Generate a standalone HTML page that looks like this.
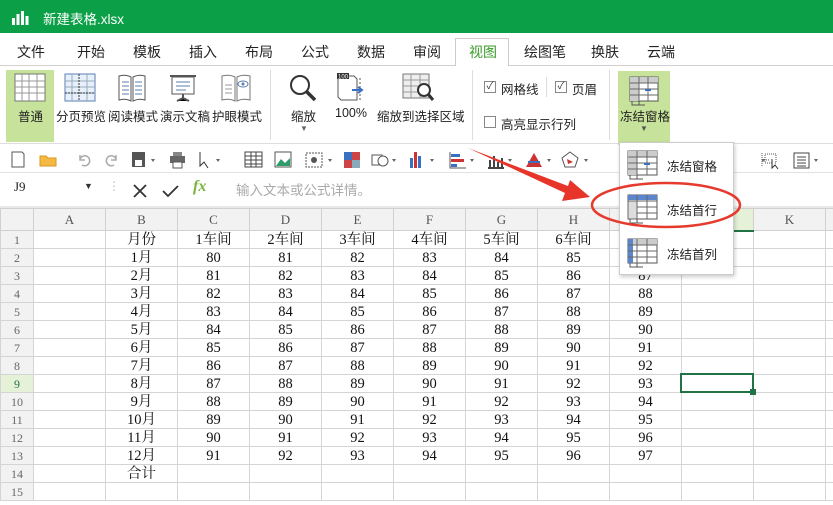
<!DOCTYPE html>
<html><head><meta charset="utf-8"><style>
*{margin:0;padding:0;box-sizing:border-box}
body{width:833px;height:505px;overflow:hidden;background:#fff;font-family:"Liberation Sans","Noto Sans CJK SC",sans-serif;position:relative;font-size:13px;color:#333}
.a{position:absolute}
.title{left:0;top:0;width:833px;height:33px;background:#0b9f48;color:#fff}
.menu{top:33px;left:0;width:833px;height:33px;border-bottom:1px solid #d0d0d0;background:#fff}
.menu span{position:absolute;top:9px;font-size:14px;color:#222}
.rib{top:66px;left:0;width:833px;height:78px;background:#fff;border-bottom:1px solid #ddd}
.lbl{font-size:12.5px;color:#222;white-space:nowrap}
.tb{top:145px;left:0;width:833px;height:28px;background:#fff;border-bottom:1px solid #e2e2e2}
.fb{top:173px;left:0;width:833px;height:33px;background:#fff}
table{position:absolute;left:0;top:208px;width:845px;border-collapse:collapse;table-layout:fixed;font-family:"Liberation Serif","Noto Serif CJK SC",serif;font-size:14.5px;color:#111}
td{height:18px;border:1px solid #d4d4d4;text-align:center;line-height:16px;padding:0;overflow:hidden;white-space:nowrap}
tr.h td{height:22px;background:#f2f2f2;color:#555;font-size:13px;border-color:#d0d0d0}
td.r{background:#f2f2f2;color:#666;font-size:12px}
.ic{position:absolute}
</style></head><body>
<div class="a title">
 <svg class="ic" style="left:12px;top:9px" width="18" height="16"><rect x="0" y="9" width="3" height="7" fill="#fff"/><rect x="4.5" y="5" width="3" height="11" fill="#fff"/><rect x="9" y="2" width="3" height="14" fill="#fff"/><rect x="13.5" y="7" width="3" height="9" fill="#fff"/></svg>
 <span class="a" style="left:43px;top:8px;font-size:13.5px">新建表格.xlsx</span>
</div>
<div class="a menu">
 <span style="left:17px">文件</span><span style="left:77px">开始</span><span style="left:133px">模板</span><span style="left:189px">插入</span><span style="left:245px">布局</span><span style="left:301px">公式</span><span style="left:357px">数据</span><span style="left:413px">审阅</span>
 <div class="a" style="left:455px;top:5px;width:54px;height:29px;border:1px solid #ccc;border-bottom:1px solid #fff;background:#fff"></div>
 <span style="left:469px;color:#3a9a2a">视图</span><span style="left:524px">绘图笔</span><span style="left:591px">换肤</span><span style="left:647px">云端</span>
</div>
<div class="a rib">
 <div class="a" style="left:6px;top:4px;width:48px;height:72px;background:#c7e29a"></div>
 <svg class="ic" style="left:14px;top:7px" width="32" height="30"><rect x="1" y="1" width="30" height="27" fill="#fff" stroke="#777"/><path d="M1 8H31M1 14H31M1 20H31M8 1V28M15 1V28M23 1V28" stroke="#999"/></svg>
 <svg class="ic" style="left:64px;top:7px" width="32" height="30"><rect x="1" y="1" width="30" height="27" fill="#e8f1fb" stroke="#5b7fb0"/><path d="M1 8H31M1 14H31M1 20H31M8 1V28M23 1V28" stroke="#9ab"/><path d="M15 1V28M1 20H31" stroke="#333" stroke-dasharray="2 1"/></svg>
 <svg class="ic" style="left:117px;top:7px" width="30" height="30"><path d="M2 3Q8 1 14 4V28Q8 25 2 27Z M28 3Q22 1 16 4V28Q22 25 28 27Z" fill="#fff" stroke="#555"/><path d="M5 9H12M5 13H12M5 17H12M5 21H12M18 9H25M18 13H25M18 17H25M18 21H25" stroke="#5b7fb0"/></svg>
 <svg class="ic" style="left:168px;top:7px" width="30" height="30"><path d="M2 3H28" stroke="#555" stroke-width="2"/><rect x="4" y="4" width="22" height="17" fill="#fff" stroke="#555"/><path d="M8 9H22M8 13H22M8 17H18" stroke="#5b7fb0"/><path d="M15 21V26M9 28L15 25L21 28" stroke="#555" stroke-width="2"/></svg>
 <svg class="ic" style="left:220px;top:7px" width="32" height="30"><path d="M2 3Q9 1 15 4V28Q9 25 2 27Z M30 3Q23 1 17 4V28Q23 25 30 27Z" fill="#fff" stroke="#777"/><path d="M5 12H12M5 16H12M5 20H12" stroke="#999"/><ellipse cx="23" cy="11" rx="5" ry="3" fill="#fff" stroke="#5b7fb0"/><circle cx="23" cy="11" r="1.5" fill="#5b7fb0"/></svg>
 <span class="a lbl" style="left:18px;top:40px">普通</span>
 <span class="a lbl" style="left:56px;top:40px">分页预览</span>
 <span class="a lbl" style="left:108px;top:40px">阅读模式</span>
 <span class="a lbl" style="left:160px;top:40px">演示文稿</span>
 <span class="a lbl" style="left:212px;top:40px">护眼模式</span>
 <div class="a" style="left:270px;top:4px;width:1px;height:70px;background:#ddd"></div>
 <svg class="ic" style="left:288px;top:7px" width="30" height="30"><circle cx="12" cy="12" r="9" fill="none" stroke="#333" stroke-width="2"/><path d="M18 18L27 27" stroke="#333" stroke-width="3.5"/></svg>
 <span class="a lbl" style="left:291px;top:40px">缩放</span>
 <span class="a" style="left:300px;top:58px;font-size:8px;color:#666">▼</span>
 <svg class="ic" style="left:336px;top:6px" width="30" height="32"><path d="M2 4H18L21 7V28H5L2 25Z" fill="#fff" stroke="#555"/><rect x="1" y="1" width="12" height="6" fill="#333"/><text x="2" y="6.5" font-size="6" fill="#fff" font-family="Liberation Sans">100</text><path d="M24 6V28" stroke="#555" stroke-dasharray="2 2"/><path d="M16 18H25M22 15L26 18L22 21" stroke="#3b6fc0" stroke-width="2" fill="none"/></svg>
 <span class="a lbl" style="left:335px;top:40px">100%</span>
 <svg class="ic" style="left:402px;top:7px" width="34" height="30"><rect x="1" y="1" width="26" height="24" fill="#eee" stroke="#777"/><path d="M1 7H27M1 13H27M1 19H27M9 1V25M18 1V25" stroke="#999"/><circle cx="22" cy="17" r="6" fill="#fff" stroke="#333" stroke-width="2"/><path d="M26 21L31 27" stroke="#333" stroke-width="3"/></svg>
 <span class="a lbl" style="left:377px;top:40px">缩放到选择区域</span>
 <div class="a" style="left:472px;top:4px;width:1px;height:70px;background:#ddd"></div>
 <div class="a" style="left:484px;top:15px;width:12px;height:12px;border:1px solid #888;font-size:10px;line-height:10px;text-align:center">✓</div>
 <span class="a lbl" style="left:501px;top:13px">网格线</span>
 <div class="a" style="left:546px;top:11px;width:1px;height:20px;background:#ddd"></div>
 <div class="a" style="left:555px;top:15px;width:12px;height:12px;border:1px solid #888;font-size:10px;line-height:10px;text-align:center">✓</div>
 <span class="a lbl" style="left:572px;top:13px">页眉</span>
 <div class="a" style="left:484px;top:50px;width:12px;height:12px;border:1px solid #888"></div>
 <span class="a lbl" style="left:501px;top:48px">高亮显示行列</span>
 <div class="a" style="left:609px;top:4px;width:1px;height:70px;background:#ddd"></div>
 <div class="a" style="left:618px;top:5px;width:52px;height:76px;background:#c7e29a"></div>
 <svg class="ic" style="left:629px;top:10px" width="32" height="30"><rect x="1" y="1" width="28" height="24" fill="#fff" stroke="#555"/><rect x="1" y="1" width="9" height="24" fill="#ccc"/><rect x="1" y="1" width="28" height="6" fill="#ccc"/><path d="M1 7H29M1 13H29M1 19H29M10 1V25M19 1V25" stroke="#666"/><path d="M16 14H22" stroke="#3b6fc0" stroke-width="2"/><path d="M3 25V29H10V25M10 29H16" stroke="#555" fill="none"/></svg>
 <span class="a lbl" style="left:620px;top:40px">冻结窗格</span>
 <span class="a" style="left:640px;top:58px;font-size:8px;color:#555">▼</span>
</div>
<div class="a tb">
 <svg class="ic" style="left:10px;top:6px" width="160" height="18"><path d="M2 1H12L14 3V16H2Z" fill="#fff" stroke="#555"/><path d="M30 5H36L38 7H46V15H30Z" fill="#f4b942" stroke="#d89a20"/><path d="M70 8A5 5 0 1 1 72 14M70 4V9H75" stroke="#aaa" fill="none" stroke-width="1.5"/><path d="M106 8A5 5 0 1 0 104 14M106 4V9H101" stroke="#aaa" fill="none" stroke-width="1.5"/><rect x="122" y="1" width="13" height="15" fill="#555"/><rect x="125" y="9" width="7" height="6" fill="#fff"/><path d="M141 8L143 11L145 8Z" fill="#666"/></svg>
 <svg class="ic" style="left:168px;top:5px" width="660" height="20">
  <rect x="2" y="6" width="15" height="7" fill="#666"/><rect x="5" y="2" width="9" height="4" fill="#888"/><rect x="5" y="12" width="9" height="6" fill="#fff" stroke="#555"/>
  <path d="M32 2L32 16L36 12L40 18" stroke="#333" fill="#fff"/><path d="M48 9L50 12L52 9Z" fill="#666"/>
  <rect x="77" y="2" width="17" height="15" fill="#fff" stroke="#444"/><path d="M77 6H94M77 10H94M77 14H94M83 2V17M88 2V17" stroke="#444"/>
  <rect x="107" y="2" width="16" height="15" fill="#fff" stroke="#555"/><path d="M108 16L113 9L117 13L122 8V16Z" fill="#2e9b6b"/>
  <rect x="138" y="3" width="16" height="14" fill="none" stroke="#555" stroke-dasharray="2 1"/><circle cx="146" cy="10" r="3" fill="#555"/><path d="M160 9L162 12L164 9Z" fill="#666"/>
  <rect x="176" y="2" width="16" height="16" fill="#c44"/><rect x="176" y="2" width="8" height="8" fill="#3b6fc0"/><rect x="184" y="10" width="8" height="8" fill="#8ab"/>
  <rect x="204" y="5" width="10" height="10" fill="none" stroke="#555"/><circle cx="215" cy="11" r="5" fill="#fff" stroke="#555"/><path d="M224 9L226 12L228 9Z" fill="#666"/>
  <rect x="242" y="8" width="3" height="10" fill="#3b6fc0"/><rect x="246" y="2" width="3" height="16" fill="#c33"/><rect x="250" y="6" width="3" height="12" fill="#3b6fc0"/><path d="M262 9L264 12L266 9Z" fill="#666"/>
  <path d="M282 2V18H298" stroke="#555" fill="none"/><rect x="283" y="4" width="9" height="3" fill="#3b6fc0"/><rect x="283" y="9" width="13" height="3" fill="#c33"/><rect x="283" y="14" width="6" height="3" fill="#3b6fc0"/><path d="M302 9L304 12L306 9Z" fill="#666"/>
  <path d="M320 18H336M322 18V10M326 18V6M330 18V12M334 18V8" stroke="#444" stroke-width="2"/><path d="M340 9L342 12L344 9Z" fill="#666"/>
  <path d="M358 17L366 3L374 17Z" fill="#c33"/><path d="M360 12L372 12" stroke="#3b6fc0" stroke-width="2"/><path d="M379 9L381 12L383 9Z" fill="#666"/>
  <path d="M402 2L410 8L407 17H397L394 8Z" fill="none" stroke="#555"/><path d="M399 9L405 12L400 14Z" fill="#c33"/><path d="M416 9L418 12L420 9Z" fill="#666"/>
  <path d="M594 3V17M594 10H602" stroke="#555" stroke-dasharray="1 1"/><path d="M593 9L595 12L597 9Z" fill="#666"/>
  <rect x="597" y="4" width="11" height="9" fill="none" stroke="#555" stroke-dasharray="1 1"/><path d="M604 9L604 18L607 15L610 19" stroke="#333" fill="#fff"/>
  <rect x="626" y="3" width="15" height="15" fill="#fff" stroke="#444"/><path d="M629 7H638M629 10H638M629 13H638M629 16H638" stroke="#444"/><path d="M646 9L648 12L650 9Z" fill="#666"/>
 </svg>
</div>
<div class="a fb">
 <span class="a" style="left:14px;top:6px;font-size:13px;font-family:'Liberation Serif',serif;color:#222">J9</span>
 <span class="a" style="left:84px;top:8px;font-size:9px;color:#333">▼</span>
 <span class="a" style="left:108px;top:6px;color:#bbb;font-size:12px">⋮</span>
 <svg class="ic" style="left:132px;top:10px" width="50" height="16"><path d="M2 2L14 14M14 2L2 14" stroke="#333" stroke-width="1.8"/><path d="M31 8L36 13L46 3" stroke="#333" stroke-width="1.8" fill="none"/></svg>
 <span class="a" style="left:193px;top:5px;font-size:16px;font-style:italic;font-weight:bold;color:#7ab33b;font-family:'Liberation Serif',serif">fx</span>
 <span class="a" style="left:236px;top:6px;font-size:13.5px;color:#aaa">输入文本或公式详情。</span>
</div>
<div class="a" style="left:0;top:206px;width:833px;height:2px;background:#e8e8e8"></div>
<table>
<colgroup><col style="width:33px"><col style="width:72px"><col style="width:72px"><col style="width:72px"><col style="width:72px"><col style="width:72px"><col style="width:72px"><col style="width:72px"><col style="width:72px"><col style="width:72px"><col style="width:72px"><col style="width:72px"><col style="width:20px"></colgroup>
<tr class="h"><td></td><td>A</td><td>B</td><td>C</td><td>D</td><td>E</td><td>F</td><td>G</td><td>H</td><td>I</td><td style="background:#e6f2d8;border-bottom:2px solid #217346">J</td><td>K</td><td></td></tr>
<tr><td class="r">1</td><td></td><td>月份</td><td>1车间</td><td>2车间</td><td>3车间</td><td>4车间</td><td>5车间</td><td>6车间</td><td></td><td></td><td></td><td></td></tr>
<tr><td class="r">2</td><td></td><td>1月</td><td>80</td><td>81</td><td>82</td><td>83</td><td>84</td><td>85</td><td>86</td><td></td><td></td><td></td></tr>
<tr><td class="r">3</td><td></td><td>2月</td><td>81</td><td>82</td><td>83</td><td>84</td><td>85</td><td>86</td><td>87</td><td></td><td></td><td></td></tr>
<tr><td class="r">4</td><td></td><td>3月</td><td>82</td><td>83</td><td>84</td><td>85</td><td>86</td><td>87</td><td>88</td><td></td><td></td><td></td></tr>
<tr><td class="r">5</td><td></td><td>4月</td><td>83</td><td>84</td><td>85</td><td>86</td><td>87</td><td>88</td><td>89</td><td></td><td></td><td></td></tr>
<tr><td class="r">6</td><td></td><td>5月</td><td>84</td><td>85</td><td>86</td><td>87</td><td>88</td><td>89</td><td>90</td><td></td><td></td><td></td></tr>
<tr><td class="r">7</td><td></td><td>6月</td><td>85</td><td>86</td><td>87</td><td>88</td><td>89</td><td>90</td><td>91</td><td></td><td></td><td></td></tr>
<tr><td class="r">8</td><td></td><td>7月</td><td>86</td><td>87</td><td>88</td><td>89</td><td>90</td><td>91</td><td>92</td><td></td><td></td><td></td></tr>
<tr><td class="r" style="color:#217346;background:#e6f2d8">9</td><td></td><td>8月</td><td>87</td><td>88</td><td>89</td><td>90</td><td>91</td><td>92</td><td>93</td><td></td><td></td><td></td></tr>
<tr><td class="r">10</td><td></td><td>9月</td><td>88</td><td>89</td><td>90</td><td>91</td><td>92</td><td>93</td><td>94</td><td></td><td></td><td></td></tr>
<tr><td class="r">11</td><td></td><td>10月</td><td>89</td><td>90</td><td>91</td><td>92</td><td>93</td><td>94</td><td>95</td><td></td><td></td><td></td></tr>
<tr><td class="r">12</td><td></td><td>11月</td><td>90</td><td>91</td><td>92</td><td>93</td><td>94</td><td>95</td><td>96</td><td></td><td></td><td></td></tr>
<tr><td class="r">13</td><td></td><td>12月</td><td>91</td><td>92</td><td>93</td><td>94</td><td>95</td><td>96</td><td>97</td><td></td><td></td><td></td></tr>
<tr><td class="r">14</td><td></td><td>合计</td><td></td><td></td><td></td><td></td><td></td><td></td><td></td><td></td><td></td><td></td></tr>
<tr><td class="r">15</td><td></td><td></td><td></td><td></td><td></td><td></td><td></td><td></td><td></td><td></td><td></td><td></td></tr>
</table>
<div class="a" style="left:680px;top:373px;width:74px;height:20px;border:2px solid #217346"></div>
<div class="a" style="left:750px;top:389px;width:6px;height:6px;background:#217346"></div>
<div class="a" style="left:619px;top:142px;width:115px;height:133px;background:#fff;border:1px solid #ccc;box-shadow:1px 2px 4px rgba(0,0,0,.2)"></div>
<svg class="ic" style="left:627px;top:150px" width="32" height="120">
 <g><rect x="1" y="1" width="29" height="24" fill="#fff" stroke="#555"/><rect x="1" y="1" width="9" height="24" fill="#ccc"/><rect x="1" y="1" width="29" height="6" fill="#ccc"/><path d="M1 7H30M1 13H30M1 19H30M10 1V25M20 1V25" stroke="#666"/><path d="M17 14H23" stroke="#3b6fc0" stroke-width="2"/><path d="M3 25V29H10V25M10 29H16" stroke="#555" fill="none"/></g>
 <g transform="translate(0,44)"><rect x="1" y="1" width="29" height="24" fill="#fff" stroke="#555"/><rect x="1" y="1" width="29" height="5" fill="#5b85cc"/><path d="M1 7H30M1 13H30M1 19H30M10 1V25M20 1V25" stroke="#666"/><rect x="1" y="7" width="9" height="18" fill="#ddd" stroke="#666"/><path d="M3 25V29H10V25M10 29H16" stroke="#555" fill="none"/></g>
 <g transform="translate(0,88)"><rect x="1" y="1" width="29" height="24" fill="#fff" stroke="#555"/><rect x="1" y="1" width="29" height="6" fill="#ccc"/><rect x="1" y="1" width="5" height="24" fill="#5b85cc"/><path d="M1 7H30M1 13H30M1 19H30M10 1V25M20 1V25" stroke="#666"/><path d="M3 25V29H10V25M10 29H16" stroke="#555" fill="none"/></g>
</svg>
<span class="a lbl" style="left:667px;top:156px">冻结窗格</span>
<span class="a lbl" style="left:667px;top:200px">冻结首行</span>
<span class="a lbl" style="left:667px;top:244px">冻结首列</span>
<svg class="ic" style="left:0;top:0" width="833" height="505">
 <ellipse cx="666" cy="205" rx="74" ry="22" fill="none" stroke="#e63a2e" stroke-width="2.5"/>
 <path d="M468 148L568 186L570 180L590 197L562 201L565 193Z" fill="#e8352a"/>
</svg>
</body></html>
